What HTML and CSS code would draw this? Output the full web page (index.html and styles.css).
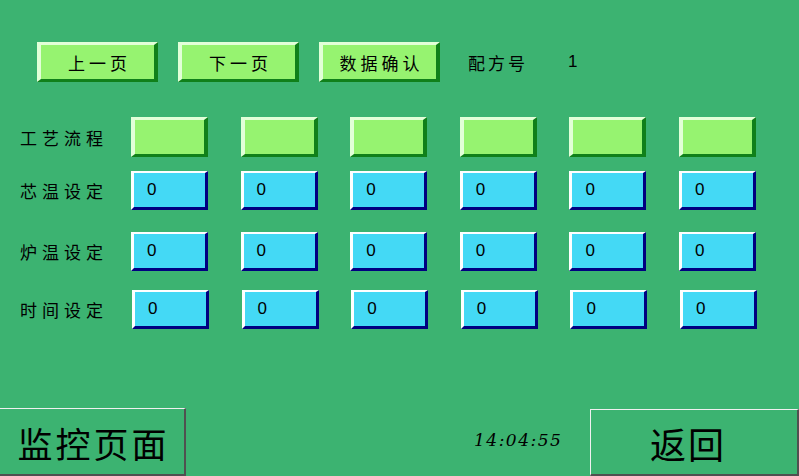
FILE: index.html
```html
<!DOCTYPE html>
<html>
<head>
<meta charset="utf-8">
<link rel="stylesheet" href="styles.css">
</head>
<body>
<div class="screen">
  <div class="topbar">
    <div class="btn green top">上一页</div>
    <div class="btn green top">下一页</div>
    <div class="btn green top">数据确认</div>
    <div class="recipe-label">配方号</div>
    <div class="recipe-num">1</div>
  </div>

  <div class="row row1">
    <div class="label">工艺流程</div>
    <div class="cells">
      <div class="cell green"></div><div class="cell green"></div><div class="cell green"></div>
      <div class="cell green"></div><div class="cell green"></div><div class="cell green"></div>
    </div>
  </div>
  <div class="row row2">
    <div class="label">芯温设定</div>
    <div class="cells">
      <div class="cell cyan">0</div><div class="cell cyan">0</div><div class="cell cyan">0</div>
      <div class="cell cyan">0</div><div class="cell cyan">0</div><div class="cell cyan">0</div>
    </div>
  </div>
  <div class="row row3">
    <div class="label">炉温设定</div>
    <div class="cells">
      <div class="cell cyan">0</div><div class="cell cyan">0</div><div class="cell cyan">0</div>
      <div class="cell cyan">0</div><div class="cell cyan">0</div><div class="cell cyan">0</div>
    </div>
  </div>
  <div class="row row4">
    <div class="label">时间设定</div>
    <div class="cells shifted">
      <div class="cell cyan">0</div><div class="cell cyan">0</div><div class="cell cyan">0</div>
      <div class="cell cyan">0</div><div class="cell cyan">0</div><div class="cell cyan">0</div>
    </div>
  </div>

  <div class="bottombar">
    <div class="bigbtn monitor">监控页面</div>
    <div class="clock">14:04:55</div>
    <div class="bigbtn back">返回</div>
  </div>
</div>
</body>
</html>
```

FILE: styles.css
```css
html, body {
  margin: 0;
  padding: 0;
}
body {
  background: #3cb371;
  font-family: "Noto Sans CJK SC", "Liberation Sans", sans-serif;
  color: #000;
}
.screen {
  width: 799px;
  height: 476px;
  display: flex;
  flex-direction: column;
  overflow: hidden;
}
.topbar {
  display: flex;
  align-items: center;
  padding: 42px 0 0 37px;
  height: 40px;
}
.btn {
  box-sizing: border-box;
  display: flex;
  align-items: center;
  justify-content: center;
  font-size: 17px;
  letter-spacing: 4px;
  text-indent: 4px;
}
.top {
  width: 121px;
  height: 40px;
  margin-right: 20px;
}
.green {
  background: #96f370;
  border-style: solid;
  border-width: 3px 4px 3px 4px;
  border-color: #e2ffd8 #10801a #10801a #e2ffd8;
}
.recipe-label {
  margin-left: 8px;
  font-size: 17px;
  letter-spacing: 3px;
}
.recipe-num {
  margin-left: 40px;
  font-family: "Liberation Sans", sans-serif;
  font-size: 17px;
}
.row {
  display: flex;
  align-items: center;
  height: 40px;
}
.row1 { margin-top: 35px; }
.row2 { margin-top: 14px; height: 39px; }
.row3 { margin-top: 22px; height: 39px; }
.row4 { margin-top: 19px; height: 39px; }
.label {
  width: 131px;
  padding-left: 20px;
  box-sizing: border-box;
  font-size: 17px;
  letter-spacing: 5px;
}
.cells {
  display: flex;
  gap: 32.6px;
}
.cells.shifted {
  margin-left: 1px;
}
.cell {
  box-sizing: border-box;
  width: 77px;
  height: 40px;
}
.row2 .cell, .row3 .cell, .row4 .cell {
  height: 39px;
}
.cyan {
  background: #44d9f5;
  border-style: solid;
  border-width: 2px 3px 3px 3px;
  border-color: #ffffff #000080 #000080 #ffffff;
  font-family: "Liberation Sans", sans-serif;
  font-size: 17px;
  display: flex;
  align-items: center;
  padding-left: 13px;
}
.bottombar {
  margin-top: auto;
  display: flex;
  align-items: flex-end;
  height: 68px;
}
.bigbtn {
  box-sizing: border-box;
  height: 68px;
  display: flex;
  align-items: center;
  justify-content: center;
  font-size: 35px;
  border-style: solid;
  border-color: #f0f0f0 #505050 #505050 #f0f0f0;
}
.monitor {
  width: 186px;
  border-width: 1px 2px 2px 0;
  letter-spacing: 3px;
  text-indent: 3px;
  padding-top: 2px;
}
.back {
  width: 209px;
  height: 67px;
  margin-left: auto;
  border-width: 1px 2px 2px 1px;
  font-size: 36px;
  letter-spacing: 2px;
  padding-right: 12px;
  padding-top: 2px;
}
.clock {
  margin-left: 288px;
  align-self: center;
  margin-bottom: 4px;
  font-family: "DejaVu Serif", "Liberation Serif", serif;
  font-style: italic;
  font-size: 17px;
  letter-spacing: 1.5px;
}
```
